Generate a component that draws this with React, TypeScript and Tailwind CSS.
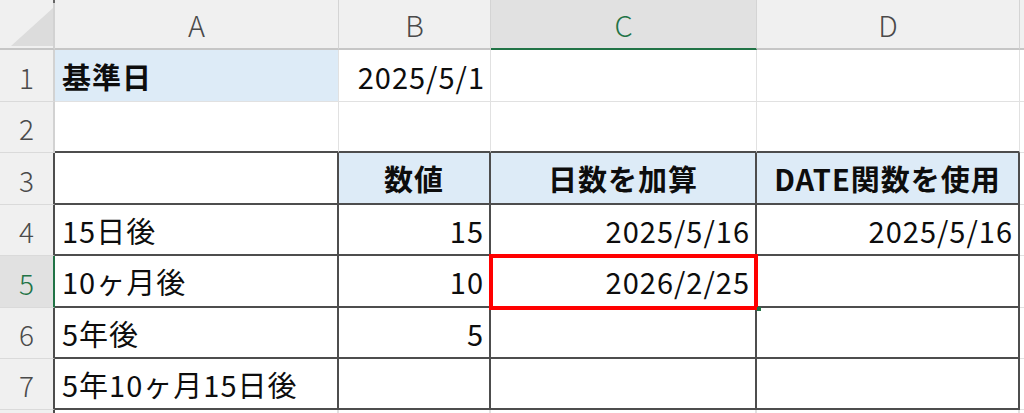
import clsx from 'clsx';

type CellDef = {
  text?: string;
  bold?: boolean;
  fill?: boolean;
  align?: 'left' | 'right' | 'center';
};

type RowDef = {
  n: number;
  cells: CellDef[];
};

const rows: RowDef[] = [
  { n: 1, cells: [{ text: '基準日', bold: true, fill: true }, { text: '2025/5/1', align: 'right' }, {}, {}] },
  { n: 2, cells: [{}, {}, {}, {}] },
  {
    n: 3,
    cells: [
      {},
      { text: '数値', bold: true, fill: true, align: 'center' },
      { text: '日数を加算', bold: true, fill: true, align: 'center' },
      { text: 'DATE関数を使用', bold: true, fill: true, align: 'center' },
    ],
  },
  {
    n: 4,
    cells: [
      { text: '15日後' },
      { text: '15', align: 'right' },
      { text: '2025/5/16', align: 'right' },
      { text: '2025/5/16', align: 'right' },
    ],
  },
  { n: 5, cells: [{ text: '10ヶ月後' }, { text: '10', align: 'right' }, { text: '2026/2/25', align: 'right' }, {}] },
  { n: 6, cells: [{ text: '5年後' }, { text: '5', align: 'right' }, {}, {}] },
  { n: 7, cells: [{ text: '5年10ヶ月15日後' }, {}, {}, {}] },
];

const SELECTED_ROW = 5;
const SELECTED_COL = 2;

function RowHeader({ n }: { n: number }) {
  const selected = n === SELECTED_ROW;
  const inTable = n >= 3;
  return (
    <div
      className={clsx(
        'flex items-center justify-center border-b border-b-[#dadada] pt-[2px] text-[28px] font-light',
        selected ? 'bg-[#e1e1e1] text-[#217346]' : 'bg-[#f0f0f0] text-[#4a4a4a]',
        selected
          ? 'border-r-2 border-r-[#217346]'
          : inTable
            ? 'border-r-2 border-r-[#4d4d4d]'
            : 'border-r-2 border-r-[#d2d2d2]',
      )}
    >
      {n}
    </div>
  );
}

function Cell({ cell, row }: { cell: CellDef; row: number }) {
  const inTable = row >= 3;
  const tableTop = row >= 2;
  return (
    <div
      className={clsx(
        'flex items-center overflow-visible whitespace-nowrap pt-[2px] text-[29px] tracking-[1px] text-[#0d0d0d]',
        cell.fill ? 'bg-[#ddebf7]' : 'bg-white',
        cell.bold && 'font-bold',
        cell.align === 'right' && 'justify-end pr-[5px]',
        cell.align === 'center' && 'justify-center',
        (!cell.align || cell.align === 'left') && 'pl-[7px]',
        inTable ? 'border-r-2 border-r-[#4d4d4d]' : 'border-r border-r-[#e1e1e1]',
        tableTop ? 'border-b-2 border-b-[#4d4d4d]' : 'border-b border-b-[#e1e1e1]',
      )}
    >
      {cell.text}
    </div>
  );
}

export default function App() {
  const colLetters = ['A', 'B', 'C', 'D'];

  return (
    <div className="h-[413px] w-[1024px] overflow-hidden bg-white font-['Noto_Sans_CJK_JP','Noto_Sans',sans-serif]">
      <div className="relative grid h-[413px] grid-cols-[55px_284px_152px_266px_263px_1fr] grid-rows-[50px_52px_51px_52px_51px_52px_51px_51px_1fr]">
        {/* corner */}
        <div className="relative border-r-2 border-b-2 border-r-[#d2d2d2] border-b-[#c6c6c6] bg-[#f0f0f0]">
          <svg className="absolute left-[11px] top-[8px]" width="42" height="38" viewBox="0 0 42 38">
            <polygon points="0,38 42,38 42,0" fill="#dcdcdc" />
          </svg>
          <div className="absolute right-[-2px] top-0 h-[3px] w-[2px] bg-[#666]" />
        </div>

        {colLetters.map((l, i) => (
          <div
            key={l}
            className={clsx(
              'flex items-center justify-center border-r border-r-[#d4d4d4] pt-[2px] text-[29px] font-light',
              i === SELECTED_COL
                ? 'border-b-2 border-b-[#217346] bg-[#e1e1e1] text-[#217346]'
                : 'border-b-2 border-b-[#c6c6c6] bg-[#f0f0f0] text-[#4a4a4a]',
            )}
          >
            {l}
          </div>
        ))}
        <div className="border-b-2 border-b-[#c6c6c6] bg-[#f0f0f0]" />

        {rows.map((r) => (
          <div key={r.n} className="contents">
            <RowHeader n={r.n} />
            {r.cells.map((c, ci) => (
              <Cell key={ci} cell={c} row={r.n} />
            ))}
            <div className="border-b border-b-[#e1e1e1] bg-white" />
          </div>
        ))}

        {/* bottom strip */}
        <div className="border-r-2 border-r-[#4d4d4d] bg-[#f0f0f0]" />
        <div className="border-r-2 border-r-[#e1e1e1] bg-white" />
        <div className="border-r-2 border-r-[#e1e1e1] bg-white" />
        <div className="border-r-2 border-r-[#e1e1e1] bg-white" />
        <div className="border-r-2 border-r-[#e1e1e1] bg-white" />
        <div className="bg-white" />

        {/* highlight box around C5 */}
        <div className="pointer-events-none absolute left-[489px] top-[254px] h-[56px] w-[269px] border-[4px] border-solid border-[#ff0000]" />
        <div className="pointer-events-none absolute left-[757px] top-[307px] h-[4px] w-[4px] bg-[#217346]" />
      </div>
    </div>
  );
}
